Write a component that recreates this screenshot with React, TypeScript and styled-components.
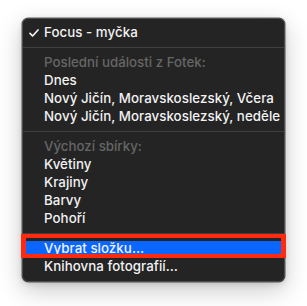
import React from 'react';
import styled, { createGlobalStyle } from 'styled-components';

type Item =
  | { kind: 'item'; label: string; checked?: boolean; selected?: boolean }
  | { kind: 'header'; label: string }
  | { kind: 'sep' };

const items: Item[] = [
  { kind: 'item', label: 'Focus - myčka', checked: true },
  { kind: 'sep' },
  { kind: 'header', label: 'Poslední události z Fotek:' },
  { kind: 'item', label: 'Dnes' },
  { kind: 'item', label: 'Nový Jičín, Moravskoslezský, Včera' },
  { kind: 'item', label: 'Nový Jičín, Moravskoslezský, neděle' },
  { kind: 'sep' },
  { kind: 'header', label: 'Výchozí sbírky:' },
  { kind: 'item', label: 'Květiny' },
  { kind: 'item', label: 'Krajiny' },
  { kind: 'item', label: 'Barvy' },
  { kind: 'item', label: 'Pohoří' },
  { kind: 'sep' },
  { kind: 'item', label: 'Vybrat složku…', selected: true },
  { kind: 'item', label: 'Knihovna fotografií…' },
];

const App: React.FC = () => {
  return (
    <>
      <GlobalStyle />
      <Page>
        <Menu>
          {items.map((it, i) => {
            if (it.kind === 'sep') return <Separator key={i} />;
            if (it.kind === 'header') return <Header key={i}>{it.label}</Header>;
            return (
              <Row key={i} $selected={it.selected}>
                <Check>
                  {it.checked && (
                    <svg width="10" height="8" viewBox="0 0 10 8">
                      <path d="M1 4.3 L3.6 7 L9 1" fill="none" stroke="#f2f2f2" strokeWidth="1.7" strokeLinecap="round" strokeLinejoin="round" />
                    </svg>
                  )}
                </Check>
                {it.label}
                {it.selected && <Annotation />}
              </Row>
            );
          })}
        </Menu>
      </Page>
    </>
  );
};

export default App;

const GlobalStyle = createGlobalStyle`
  html, body {
    margin: 0;
    padding: 0;
    background: #ffffff;
  }
`;

const Page = styled.div`
  width: 307px;
  height: 306px;
  padding: 18px 22px 0;
  box-sizing: border-box;
  font-family: Inter, "Noto Sans", sans-serif;
`;

const Menu = styled.div`
  width: 263px;
  box-sizing: border-box;
  background: #242424;
  border: 1px solid #4d4d4d;
  border-radius: 6px;
  padding: 4px 3px 6px;
  box-shadow:
    0 0 0 0.5px rgba(0, 0, 0, 0.6),
    0 8px 24px rgba(0, 0, 0, 0.22),
    0 2px 6px rgba(0, 0, 0, 0.12);
`;

const Row = styled.div<{ $selected?: boolean }>`
  position: relative;
  height: 18px;
  display: flex;
  align-items: center;
  padding-left: 18px;
  color: #f2f2f2;
  font-size: 13.3px;
  font-weight: 500;
  letter-spacing: 0.05px;
  white-space: nowrap;
  background: ${(p) =>
    p.$selected ? 'linear-gradient(transparent 2px, #0a66ff 2px)' : 'transparent'};
`;

const Check = styled.span`
  position: absolute;
  left: 3px;
  top: 6px;
  display: flex;
`;

const Header = styled.div`
  height: 18px;
  display: flex;
  align-items: center;
  padding-left: 18px;
  color: #666666;
  font-size: 13.3px;
  font-weight: 500;
  white-space: nowrap;
`;

const Separator = styled.div`
  height: 12px;
  display: flex;
  align-items: center;
  margin: 0 -3px;

  &::after {
    content: '';
    flex: 1;
    height: 1px;
    background: #3f3f3f;
  }
`;

const Annotation = styled.div`
  position: absolute;
  left: -5px;
  right: -5px;
  top: -5px;
  bottom: -1px;
  border-style: solid;
  border-color: #ff2a0f;
  border-width: 4px 5px;
  pointer-events: none;
`;
